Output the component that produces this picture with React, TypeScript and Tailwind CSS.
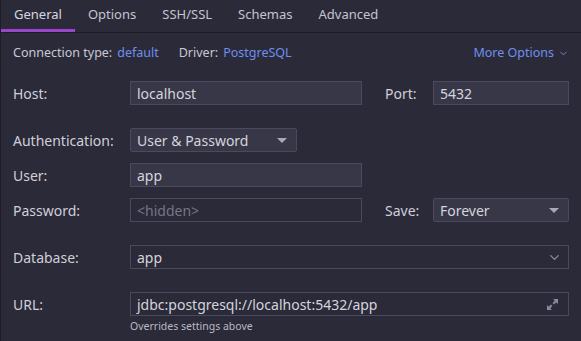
import { ChevronDown } from "lucide-react"

const TABS = ["General", "Options", "SSH/SSL", "Schemas", "Advanced"]

const Caret = () => (
  <svg width="10" height="5" viewBox="0 0 10 5" className="text-[#a9a8b8]">
    <path d="M0 0h10L5 5z" fill="currentColor" />
  </svg>
)

const ExpandIcon = () => (
  <svg width="13" height="13" viewBox="0 0 13 13" fill="#8b8aa0">
    <path d="M7 1h5v5l-1.8-1.8-2.2 2.2-1.4-1.4 2.2-2.2z" />
    <path d="M6 12H1V7l1.8 1.8 2.2-2.2 1.4 1.4-2.2 2.2z" />
  </svg>
)

const Field = ({ value, filled = true, placeholder = false, className = "", children }: { value: string, filled?: boolean, placeholder?: boolean, className?: string, children?: React.ReactNode }) => (
  <div className={`h-6 flex items-center justify-between pl-[6px] pr-[9px] border border-[#4a4960] ${filled ? "bg-[#383748]" : ""} ${className}`}>
    <span className={placeholder ? "text-[#767586]" : "text-[#d4d4de]"}>{value}</span>
    {children}
  </div>
)

const Label = ({ text, w = "w-[117px]" }: { text: string, w?: string }) => (
  <span className={`${w} shrink-0 text-[#cfcfda]`}>{text}</span>
)

export default function App() {
  return (
    <div className="w-[581px] h-[341px] bg-[#2b2a38] border-l border-[#1e1d28] text-[13px] overflow-hidden" style={{ fontFamily: '"Noto Sans", "Open Sans", sans-serif' }}>
      <div className="flex h-[33px] border-b border-[#1c1b26]">
        {TABS.map((tab, i) => (
          <div key={tab} className={`px-[13px] flex items-center border-b-[3px] ${i === 0 ? "border-[#9b45cf] text-[#d6d6e0]" : "border-transparent text-[#c4c4d0]"}`}>
            {tab}
          </div>
        ))}
      </div>

      <div className="pl-3 pr-3">
        <div className="flex items-center h-[18px] mt-[11px] text-[12.5px]">
          <span className="text-[#c8c8d4]">Connection type:</span>
          <span className="ml-[5px] text-[#6f8ff0]">default</span>
          <span className="ml-5 text-[#c8c8d4]">Driver:</span>
          <span className="ml-[5px] text-[#6f8ff0]">PostgreSQL</span>
          <span className="ml-auto flex items-center gap-1 text-[#6f8ff0]">More Options <ChevronDown size={11} strokeWidth={2} className="text-[#7c8fd8]" /></span>
        </div>

        <div className="text-[14px]">
          <div className="flex items-center mt-[19px]">
            <Label text="Host:" />
            <Field value="localhost" className="w-[232px]" />
            <Label text="Port:" w="w-[48px] ml-[23px]" />
            <Field value="5432" className="w-[136px]" />
          </div>

          <div className="flex items-center mt-[23px]">
            <Label text="Authentication:" />
            <Field value="User & Password" className="w-[167px] rounded-[2px]"><Caret /></Field>
          </div>

          <div className="flex items-center mt-[11px]">
            <Label text="User:" />
            <Field value="app" className="w-[232px]" />
          </div>

          <div className="flex items-center mt-[11px]">
            <Label text="Password:" />
            <Field value="<hidden>" filled={false} placeholder className="w-[232px]" />
            <Label text="Save:" w="w-[48px] ml-[23px]" />
            <Field value="Forever" className="w-[136px] rounded-[2px]"><Caret /></Field>
          </div>

          <div className="flex items-center mt-[23px]">
            <Label text="Database:" />
            <Field value="app" filled={false} className="w-[439px]">
              <ChevronDown size={15} strokeWidth={2.2} className="text-[#8b8aa0] -mr-[3px]" />
            </Field>
          </div>

          <div className="flex items-center mt-[23px]">
            <Label text="URL:" />
            <Field value="jdbc:postgresql://localhost:5432/app" filled={false} className="w-[439px]">
              <ExpandIcon />
            </Field>
          </div>
        </div>
        <div className="pl-[117px] mt-[2px] text-[10.5px] text-[#b8b8c6] leading-[16px]">Overrides settings above</div>
      </div>
    </div>
  )
}
